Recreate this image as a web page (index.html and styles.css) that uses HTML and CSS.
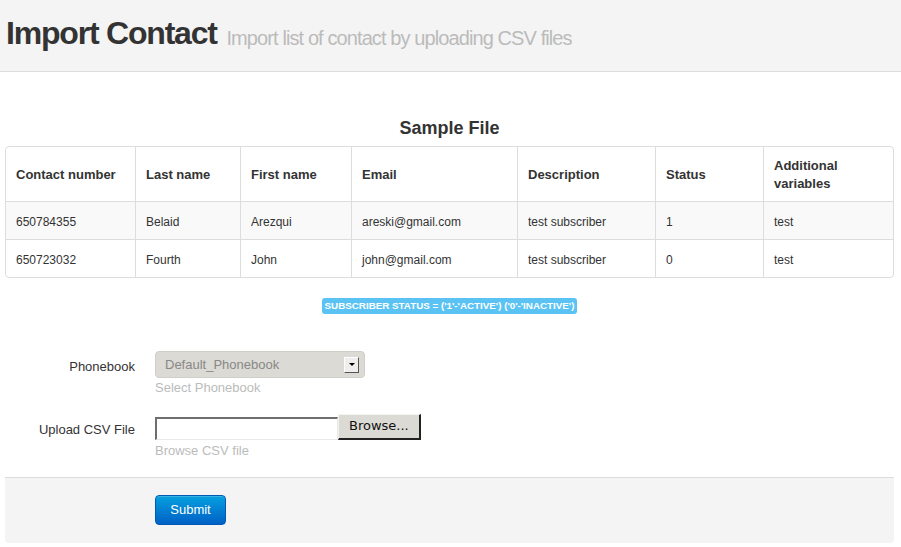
FILE: index.html
```html
<!DOCTYPE html>
<html>
<head>
<meta charset="utf-8">
<title>Import Contact</title>
<link rel="stylesheet" href="styles.css">
</head>
<body>
<header class="page-header">
  <h1 class="page-title">Import Contact <small class="page-subtitle">Import list of contact by uploading CSV files</small></h1>
</header>
<main class="content">
  <h3 class="section-title">Sample File</h3>
  <table class="sample-table">
    <colgroup>
      <col class="c1"><col class="c2"><col class="c3"><col class="c4"><col class="c5"><col class="c6"><col class="c7">
    </colgroup>
    <thead>
      <tr>
        <th>Contact number</th>
        <th>Last name</th>
        <th>First name</th>
        <th>Email</th>
        <th>Description</th>
        <th>Status</th>
        <th>Additional variables</th>
      </tr>
    </thead>
    <tbody>
      <tr class="striped">
        <td>650784355</td>
        <td>Belaid</td>
        <td>Arezqui</td>
        <td>areski@gmail.com</td>
        <td>test subscriber</td>
        <td>1</td>
        <td>test</td>
      </tr>
      <tr>
        <td>650723032</td>
        <td>Fourth</td>
        <td>John</td>
        <td>john@gmail.com</td>
        <td>test subscriber</td>
        <td>0</td>
        <td>test</td>
      </tr>
    </tbody>
  </table>
  <div class="status-row">
    <span class="status-badge">SUBSCRIBER STATUS = ('1'-'ACTIVE') ('0'-'INACTIVE')</span>
  </div>
  <form class="import-form">
    <div class="form-row row-phonebook">
      <label class="control-label">Phonebook</label>
      <div class="controls">
        <div class="fake-select">
          <span class="fake-select-text">Default_Phonebook</span>
          <span class="fake-select-arrow"><span class="tri"></span></span>
        </div>
        <p class="help help-select">Select Phonebook</p>
      </div>
    </div>
    <div class="form-row row-upload">
      <label class="control-label">Upload CSV File</label>
      <div class="controls">
        <div class="file-input">
          <span class="file-text"></span>
          <span class="file-button">Browse...</span>
        </div>
        <p class="help help-file">Browse CSV file</p>
      </div>
    </div>
    <div class="form-actions">
      <button type="button" class="btn-submit">Submit</button>
    </div>
  </form>
</main>
</body>
</html>
```
FILE: styles.css
```css
* { box-sizing: border-box; }

html, body {
  margin: 0;
  padding: 0;
  background: #fff;
  font-family: "Liberation Sans", Arial, sans-serif;
  color: #333;
}

.page-header {
  background: #f4f4f4;
  border-bottom: 1px solid #dcdcdc;
  height: 72px;
  padding: 17px 0 0 6px;
}

.page-title {
  margin: 0;
  font-size: 32px;
  line-height: 32px;
  font-weight: bold;
  letter-spacing: -1.2px;
  color: #333;
  white-space: nowrap;
}

.page-subtitle {
  font-size: 20px;
  font-weight: normal;
  letter-spacing: -0.9px;
  color: #bbb;
  margin-left: 2px;
  position: relative;
  top: 1px;
}

.content {
  width: 889px;
  margin-left: 5px;
}

.section-title {
  margin: 46px 0 0;
  font-size: 18px;
  line-height: 20px;
  font-weight: bold;
  text-align: center;
  color: #333;
}

.sample-table {
  margin-top: 8px;
  width: 889px;
  table-layout: fixed;
  border-collapse: separate;
  border-spacing: 0;
  border: 1px solid #ddd;
  border-radius: 4px;
}

.c1 { width: 129px; }
.c2 { width: 105px; }
.c3 { width: 111px; }
.c4 { width: 166px; }
.c5 { width: 138px; }
.c6 { width: 108px; }
.c7 { width: 130px; }

.sample-table th,
.sample-table td {
  text-align: left;
  vertical-align: middle;
  padding: 2px 10px 0;
  border-left: 1px solid #ddd;
}

.sample-table th:first-child,
.sample-table td:first-child {
  border-left: 0;
}

.sample-table th {
  height: 54px;
  font-size: 13px;
  line-height: 18px;
  font-weight: bold;
  color: #333;
}

.sample-table td {
  height: 38px;
  border-top: 1px solid #ddd;
  font-size: 12px;
  line-height: 18px;
  color: #333;
}

.sample-table tr.striped td {
  background: #f9f9f9;
}

.status-row {
  margin-top: 20px;
  display: flex;
  justify-content: center;
}

.status-badge {
  display: block;
  height: 16px;
  line-height: 16px;
  padding: 0 3px;
  background: #5ac3f4;
  color: #fff;
  font-size: 9.8px;
  font-weight: bold;
  border-radius: 3px;
  white-space: nowrap;
}

.import-form {
  margin-top: 37px;
}

.form-row {
  display: flex;
  align-items: flex-start;
}

.row-upload {
  margin-top: 17px;
}

.control-label {
  width: 130px;
  text-align: right;
  font-size: 13px;
  line-height: 27px;
  padding-top: 2px;
  color: #333;
}

.controls {
  margin-left: 20px;
}

.fake-select {
  width: 210px;
  height: 27px;
  background: #dcdad5;
  border: 1px solid #d0cec9;
  border-radius: 4px;
  display: flex;
  align-items: center;
  justify-content: space-between;
  padding: 0 5px 0 9px;
}

.fake-select-text {
  font-size: 13px;
  color: #888;
  line-height: 25px;
}

.fake-select-arrow {
  width: 15px;
  height: 16px;
  background: #efeeec;
  border: 1px solid;
  border-color: #fff #555 #555 #fff;
  display: flex;
  align-items: center;
  justify-content: center;
}

.tri {
  width: 0;
  height: 0;
  border-left: 3px solid transparent;
  border-right: 3px solid transparent;
  border-top: 3px solid #000;
}

.help {
  margin: 1px 0 0;
  font-size: 13px;
  line-height: 18px;
  color: #bbb;
}

.help-file {
  margin-top: 2px;
}

.file-input {
  display: flex;
  align-items: flex-end;
  height: 26px;
}

.file-text {
  display: block;
  width: 183px;
  height: 23px;
  background: #fff;
  border-top: 2px solid #6e6e6e;
  border-left: 2px solid #6e6e6e;
  border-right: 1px solid #e8e8e8;
  border-bottom: 1px solid #e8e8e8;
}

.file-button {
  display: block;
  width: 83px;
  height: 26px;
  background: #dcdad5;
  border-top: 1px solid #f4f3f1;
  border-left: 1px solid #f4f3f1;
  border-right: 2px solid #222;
  border-bottom: 2px solid #222;
  font-family: "DejaVu Sans", sans-serif;
  font-size: 13px;
  line-height: 22px;
  padding-left: 10px;
  color: #111;
}

.form-actions {
  margin-top: 17px;
  background: #f4f4f4;
  border-top: 1px solid #dcdcdc;
  border-radius: 0 0 4px 4px;
  padding: 17px 0 18px 150px;
}

.btn-submit {
  display: block;
  width: 71px;
  height: 30px;
  padding: 0;
  border: 1px solid #0059b3;
  border-radius: 4px;
  background: linear-gradient(#06a0df, #0061c6);
  color: #fff;
  font-family: "Liberation Sans", Arial, sans-serif;
  font-size: 13px;
  line-height: 28px;
  text-align: center;
  box-shadow: inset 0 1px 0 rgba(255,255,255,0.2);
}
```
